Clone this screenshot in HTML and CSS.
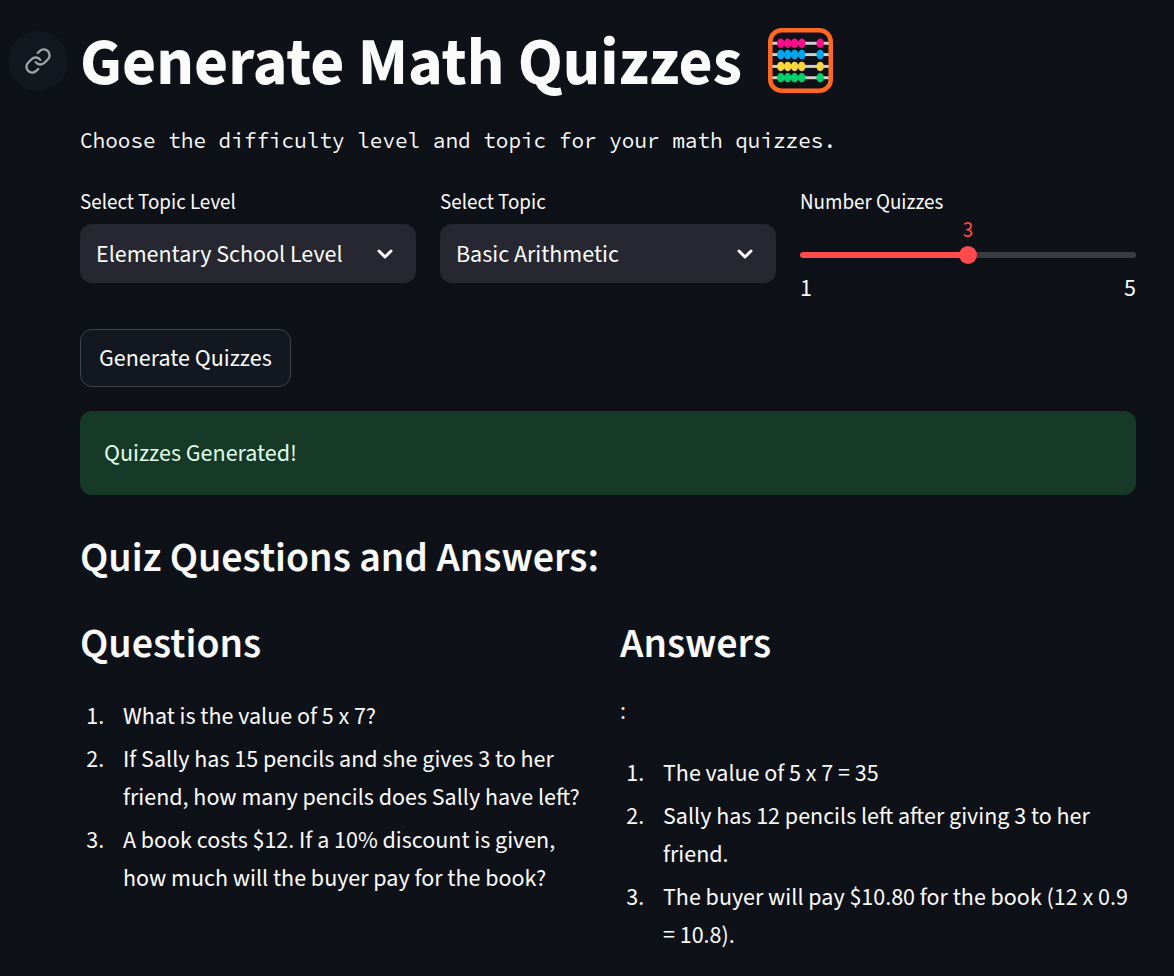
FILE: index.html
```
<!DOCTYPE html>
<html lang="en">
<head>
<meta charset="utf-8">
<meta name="viewport" content="width=device-width, initial-scale=1">
<title>Generate Math Quizzes</title>
<link rel="stylesheet" href="styles.css">
</head>
<body>
<main class="page">
  <header class="title-row" id="top">
    <a class="anchor" href="#top" aria-label="Link to this heading">
      <svg class="anchor-icon" viewBox="0 0 24 24" fill="none" stroke="currentColor" stroke-width="2" stroke-linecap="round" stroke-linejoin="round" aria-hidden="true">
        <path d="M10 13a5 5 0 0 0 7.54.54l3-3a5 5 0 0 0-7.07-7.07l-1.72 1.71"/>
        <path d="M14 11a5 5 0 0 0-7.54-.54l-3 3a5 5 0 0 0 7.07 7.07l1.71-1.71"/>
      </svg>
    </a>
    <h1 class="title">Generate Math Quizzes</h1>
    <svg class="abacus" viewBox="0 0 66 66" role="img" aria-label="Abacus">
      <g fill="#d0d0d0">
        <rect x="4" y="14" width="58" height="3"/>
        <rect x="4" y="25.5" width="58" height="3"/>
        <rect x="4" y="37.5" width="58" height="3"/>
        <rect x="4" y="49" width="58" height="3"/>
      </g>
      <rect x="2.3" y="2.3" width="61.4" height="61.4" rx="11.5" fill="none" stroke="#ff6723" stroke-width="4.6"/>
      <g fill="#ff0a8c">
        <ellipse cx="13" cy="15.5" rx="3.8" ry="4.8"/><ellipse cx="20" cy="15.5" rx="3.8" ry="4.8"/><ellipse cx="27" cy="15.5" rx="3.8" ry="4.8"/><ellipse cx="34.3" cy="15.5" rx="3.8" ry="4.8"/><ellipse cx="53" cy="15.5" rx="3.8" ry="4.8"/>
      </g>
      <g fill="#00a6ed">
        <ellipse cx="13" cy="27" rx="3.8" ry="4.8"/><ellipse cx="20" cy="27" rx="3.8" ry="4.8"/><ellipse cx="27" cy="27" rx="3.8" ry="4.8"/><ellipse cx="34.3" cy="27" rx="3.8" ry="4.8"/><ellipse cx="53" cy="27" rx="3.8" ry="4.8"/>
      </g>
      <g fill="#ffd53e">
        <ellipse cx="13" cy="39" rx="3.8" ry="4.8"/><ellipse cx="20" cy="39" rx="3.8" ry="4.8"/><ellipse cx="27" cy="39" rx="3.8" ry="4.8"/><ellipse cx="34.3" cy="39" rx="3.8" ry="4.8"/><ellipse cx="53" cy="39" rx="3.8" ry="4.8"/>
      </g>
      <g fill="#00d26a">
        <ellipse cx="13" cy="50.5" rx="3.8" ry="4.8"/><ellipse cx="20" cy="50.5" rx="3.8" ry="4.8"/><ellipse cx="27" cy="50.5" rx="3.8" ry="4.8"/><ellipse cx="34.3" cy="50.5" rx="3.8" ry="4.8"/><ellipse cx="53" cy="50.5" rx="3.8" ry="4.8"/>
      </g>
    </svg>
  </header>

  <p class="intro">Choose the difficulty level and topic for your math quizzes.</p>

  <form class="quiz-form">
    <div class="controls">
      <div class="field">
        <label class="label" for="level">Select Topic Level</label>
        <div class="select-wrap">
          <select class="select" id="level"><option>Elementary School Level</option></select>
          <svg class="chevron" viewBox="0 0 16 10" aria-hidden="true"><path d="M2 2l6 6 6-6"/></svg>
        </div>
      </div>
      <div class="field">
        <label class="label" for="topic">Select Topic</label>
        <div class="select-wrap">
          <select class="select" id="topic"><option>Basic Arithmetic</option></select>
          <svg class="chevron" viewBox="0 0 16 10" aria-hidden="true"><path d="M2 2l6 6 6-6"/></svg>
        </div>
      </div>
      <div class="field">
        <label class="label" for="count">Number Quizzes</label>
        <output class="slider-value" for="count">3</output>
        <input class="slider" id="count" type="range" min="1" max="5" value="3">
        <div class="slider-range"><span>1</span><span>5</span></div>
      </div>
    </div>
    <button class="button" type="button">Generate Quizzes</button>
  </form>

  <div class="alert" role="status">Quizzes Generated!</div>

  <h2 class="heading">Quiz Questions and Answers:</h2>

  <div class="results">
    <section>
      <h2 class="heading">Questions</h2>
      <div class="text">
        <ol class="list">
          <li>What is the value of 5 x 7?</li>
          <li>If Sally has 15 pencils and she gives 3 to her friend, how many pencils does Sally have left?</li>
          <li>A book costs $12. If a 10% discount is given, how much will the buyer pay for the book?</li>
        </ol>
      </div>
    </section>
    <section>
      <h2 class="heading">Answers</h2>
      <div class="text">
        <p class="lead">:</p>
        <ol class="list">
          <li>The value of 5 x 7 = 35</li>
          <li>Sally has 12 pencils left after giving 3 to her friend.</li>
          <li>The buyer will pay $10.80 for the book (12 x 0.9 = 10.8).</li>
        </ol>
      </div>
    </section>
  </div>
</main>
</body>
</html>
```
FILE: styles.css
```
* { box-sizing: border-box; }

body {
  margin: 0;
  background: #0e1117;
  color: #fafafa;
  font-family: "Source Sans 3", "Source Sans Pro", "Noto Sans CJK SC", "Open Sans", sans-serif;
  font-size: 24px;
  line-height: 38px;
}

.page { padding: 22px 38px 12px 80px; }

.title-row {
  display: flex;
  align-items: center;
  height: 78px;
}

.anchor {
  display: flex;
  flex: none;
  align-items: center;
  justify-content: center;
  width: 60px;
  height: 60px;
  margin-left: -72px;
  margin-right: 12px;
  border-radius: 50%;
  background: #13171f;
  color: #a3a4a8;
}

.anchor-icon { width: 28px; height: 28px; }

.title {
  margin: 0;
  padding-top: 4px;
  font-size: 66px;
  font-weight: 700;
  line-height: 78px;
}

.abacus {
  flex: none;
  width: 65px;
  height: 65px;
  margin: 0 0 2px 26px;
}

.intro {
  margin: 24px 0 0;
  font-family: "Source Code Pro", "DejaVu Sans Mono", monospace;
  font-size: 21px;
  line-height: 34px;
}

.controls {
  display: grid;
  grid-template-columns: repeat(3, minmax(0, 1fr));
  gap: 24px;
  padding-top: 24px;
}

.field { display: flex; flex-direction: column; }

.label {
  padding-top: 2px;
  margin-bottom: 4px;
  font-size: 21px;
  line-height: 36px;
}

.select-wrap { position: relative; }

.select {
  width: 100%;
  height: 59px;
  padding: 2px 48px 0 16px;
  border: 0;
  border-radius: 12px;
  appearance: none;
  background: #262730;
  color: inherit;
  font: inherit;
}

.chevron {
  position: absolute;
  top: 25px;
  right: 23px;
  width: 16px;
  height: 10px;
  fill: none;
  stroke: #fafafa;
  stroke-width: 3;
  stroke-linecap: round;
  stroke-linejoin: round;
  pointer-events: none;
}

.slider-value {
  color: #ff4b4b;
  font-size: 21px;
  line-height: 24px;
  text-align: center;
  margin-top: -6px;
}

.slider {
  width: 100%;
  height: 18px;
  margin: 4px 0 8px;
  appearance: none;
  background: transparent;
}

.slider::-webkit-slider-runnable-track {
  height: 6px;
  border-radius: 3px;
  background: linear-gradient(to right, #ff4b4b 50%, #3a3c44 50%);
}

.slider::-webkit-slider-thumb {
  width: 18px;
  height: 18px;
  margin-top: -6px;
  appearance: none;
  border-radius: 50%;
  background: #ff4b4b;
}

.slider-range {
  display: flex;
  justify-content: space-between;
  line-height: 33px;
}

.button {
  display: block;
  height: 58px;
  margin-top: 24px;
  padding: 2px 18px 0;
  border: 1px solid #41444c;
  border-radius: 12px;
  background: #13171f;
  color: inherit;
  font: inherit;
}

.alert {
  margin: 24px 0;
  padding: 24px 24px 22px;
  border-radius: 12px;
  background: #173928;
  color: #dffde9;
}

.heading {
  margin: 0;
  padding: 14px 0 10px;
  font-size: 42px;
  font-weight: 600;
  line-height: 50px;
}

.results {
  display: grid;
  grid-template-columns: repeat(2, minmax(0, 1fr));
  gap: 24px;
  padding-top: 12px;
}

.text { padding-top: 14px; }

.lead { margin: 0 0 24px; }

.list { margin: 0; padding: 0; }

.list li {
  margin: 5px 0 5px 29px;
  padding-left: 14px;
}
```
